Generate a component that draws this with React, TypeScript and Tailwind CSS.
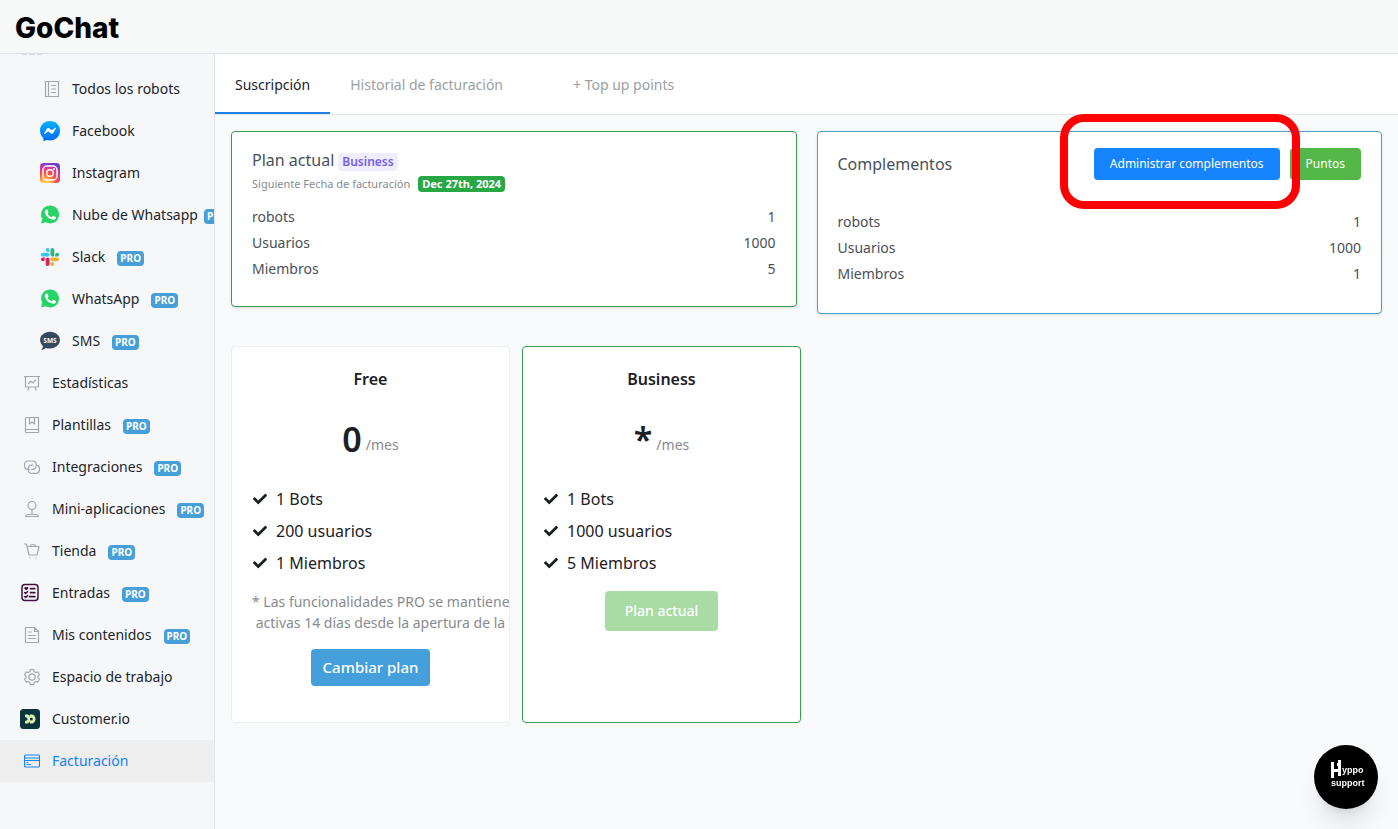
import type { ReactNode } from 'react';
import { FaCheck } from 'react-icons/fa';

interface MenuItem {
  label: string;
  icon: ReactNode;
  nested?: boolean;
  pro?: boolean;
  active?: boolean;
  tight?: boolean;
}

function LineIcon({ children }: { children: ReactNode }) {
  return (
    <svg
      className="w-4 h-4 shrink-0"
      viewBox="0 0 16 16"
      fill="none"
      stroke="currentColor"
      strokeWidth="1.200"
      strokeLinecap="round"
      strokeLinejoin="round"
    >
      {children}
    </svg>
  );
}

function MessengerIcon() {
  return (
    <svg className="w-5 h-5" viewBox="0 0 20 20">
      <defs>
        <linearGradient id="messenger" x1="0" y1="0" x2="0" y2="1">
          <stop offset="0" stopColor="#00b2ff" />
          <stop offset="1" stopColor="#006aff" />
        </linearGradient>
      </defs>
      <path
        fill="url(#messenger)"
        d="M10 0C4.400 0 0 4.100 0 9.600c0 2.900 1.200 5.400 3.100 7.100.2.200.3.400.3.700v1.800c0 .6.600 1 1.100.7l2-.9c.2-.1.400-.1.500 0 1 .3 2 .4 3 .4 5.600 0 10-4.100 10-9.700S15.600 0 10 0z"
      />
      <path
        fill="#fff"
        d="m4 12.400 2.900-4.700c.5-.7 1.500-.9 2.200-.4l2.300 1.800c.2.200.5.200.7 0l3.200-2.400c.4-.3 1 .2.700.6l-2.900 4.700c-.5.700-1.500.9-2.200.4L8.600 10.600c-.2-.2-.5-.2-.7 0L4.700 13c-.4.300-1-.2-.7-.6z"
      />
    </svg>
  );
}

function InstagramIcon() {
  return (
    <svg className="w-5 h-5" viewBox="0 0 20 20">
      <defs>
        <radialGradient id="insta" cx="0.27" cy="1.05" r="1.05">
          <stop offset="0" stopColor="#ffdd55" />
          <stop offset="0.2" stopColor="#ffc050" />
          <stop offset="0.5" stopColor="#ff543e" />
          <stop offset="0.85" stopColor="#c837ab" />
          <stop offset="1" stopColor="#6a3fd0" />
        </radialGradient>
      </defs>
      <rect width="20" height="20" rx="3.500" fill="url(#insta)" />
      <rect x="3" y="3" width="14" height="14" rx="4" fill="none" stroke="#fff" strokeWidth="1.400" />
      <circle cx="10" cy="10" r="3.300" fill="none" stroke="#fff" strokeWidth="1.400" />
      <circle cx="14" cy="6" r="0.900" fill="#fff" />
    </svg>
  );
}

function WhatsappIcon() {
  return (
    <svg className="w-5 h-5" viewBox="0 0 20 20">
      <path
        fill="#25d366"
        d="M10.100 .5C5.100 .5 1.100 4.500 1.100 9.400c0 1.600.4 3.100 1.200 4.500L1 18.500l4.800-1.200c1.300.7 2.800 1.100 4.300 1.100 5 0 8.900-4 8.900-9S15 .5 10.100 .5z"
      />
      <path
        fill="#fff"
        d="M7.600 5c-.2-.4-.4-.4-.6-.4h-.5c-.2 0-.5.100-.7.300-.3.300-1 .9-1 2.200s1 2.600 1.100 2.800c.1.200 1.900 3 4.700 4.100 2.300.9 2.800.7 3.300.7.500-.1 1.600-.7 1.900-1.300.2-.6.200-1.200.1-1.300 0-.1-.2-.2-.5-.3l-1.900-.9c-.3-.1-.5-.1-.7.100l-.8 1.100c-.2.200-.3.200-.6.100-.3-.2-1.200-.5-2.200-1.400-.8-.7-1.400-1.600-1.500-1.900-.2-.3 0-.4.100-.6l.7-.9c.1-.2 0-.4 0-.5z"
      />
    </svg>
  );
}

function SlackIcon() {
  return (
    <svg className="w-[18px] h-[18px] mx-auto" viewBox="0 0 122 122">
      <path fill="#e01e5a" d="M26 77a13 13 0 1 1-13-13h13zm6 0a13 13 0 1 1 26 0v32a13 13 0 1 1-26 0z" />
      <path fill="#36c5f0" d="M45 26a13 13 0 1 1 13-13v13zm0 6a13 13 0 1 1 0 26H13a13 13 0 1 1 0-26z" />
      <path fill="#2eb67d" d="M96 45a13 13 0 1 1 13 13H96zm-6 0a13 13 0 1 1-26 0V13a13 13 0 1 1 26 0z" />
      <path fill="#ecb22e" d="M77 96a13 13 0 1 1-13 13V96zm0-6a13 13 0 1 1 0-26h32a13 13 0 1 1 0 26z" />
    </svg>
  );
}

function SmsIcon() {
  return (
    <svg className="w-5 h-5" viewBox="0 0 20 20">
      <path
        fill="#34495e"
        d="M10 .8C4.500 .8 .1 4.400.1 9.100c0 2.500 1.200 4.600 2.900 6.100-.1 1.300-.6 2.400-1.900 3.600 2 0 3.600-.6 4.900-1.800 1.300.4 2.600.6 4 .6 5.500 0 9.900-3.800 9.900-8.500S15.500 .8 10 .8z"
      />
      <text x="10" y="11.600" textAnchor="middle" fontSize="6.500" fontWeight="700" fill="#fff" fontFamily="Noto Sans, sans-serif">
        SMS
      </text>
    </svg>
  );
}

function TicketIcon() {
  return (
    <svg className="w-5 h-5" viewBox="0 0 20 20" fill="none" stroke="#43113f" strokeWidth="1.700" strokeLinecap="round">
      <rect x="2" y="1.500" width="16" height="16" rx="3" strokeWidth="1.500" />
      <path d="M10.500 5.700h4.300M10.500 9.700h4.300M9.500 13.700h5.300" />
      <path d="m4.600 9.500 1.100 1 2-2M4.600 13.500l1.100 1 2-2" strokeWidth="1.400" />
      <path d="M6.300 7.500 4.400 5.600c-.6-1.100 1-2.100 1.900-1 .9-1.100 2.500-.1 1.900 1z" fill="#43113f" stroke="none" />
    </svg>
  );
}

function CustomerIcon() {
  return (
    <svg className="w-5 h-5" viewBox="0 0 20 20">
      <rect width="20" height="20" rx="3.500" fill="#0b353b" />
      <path
        fill="#d9f5b5"
        d="M5 5.500h2.200c1.300 0 2.300.9 2.700 2.200V5.500h1.600c2.300 0 4 2 4 4.500s-1.700 4.500-4 4.500H9.900v-2.200c-.4 1.300-1.400 2.200-2.700 2.200H5v-2.800h1.100c.8 0 1.300-.7 1.300-1.700S6.900 8.300 6.100 8.300H5z"
      />
      <circle cx="11.300" cy="10" r="1.500" fill="#0b353b" />
    </svg>
  );
}

const menuItems: MenuItem[] = [
  {
    label: 'Todos los robots',
    nested: true,
    icon: (
      <LineIcon>
        <path d="M1.500 .5h13v15h-13zM4.500 .5v15M7.500 4.500h4M7.500 8h4M7.500 11.500h4" />
      </LineIcon>
    )
  },
  { label: 'Facebook', nested: true, icon: <MessengerIcon /> },
  { label: 'Instagram', nested: true, icon: <InstagramIcon /> },
  { label: 'Nube de Whatsapp', nested: true, pro: true, tight: true, icon: <WhatsappIcon /> },
  { label: 'Slack', nested: true, pro: true, icon: <SlackIcon /> },
  { label: 'WhatsApp', nested: true, pro: true, icon: <WhatsappIcon /> },
  { label: 'SMS', nested: true, pro: true, icon: <SmsIcon /> },
  {
    label: 'Estadísticas',
    icon: (
      <LineIcon>
        <path d="M.5 1.500h15M1.500 1.500v10.500h13V1.500M5 12.500l-1.200 2.500M11 12.500l1.200 2.500M4.500 8.500l2.300-2.300 2 1.600L11.500 5" />
      </LineIcon>
    )
  },
  {
    label: 'Plantillas',
    pro: true,
    icon: (
      <LineIcon>
        <path d="M2.500 .5h12v15h-12a1 1 0 0 1-1-1v-13a1 1 0 0 1 1-1zM1.500 13.500a1 1 0 0 1 1-1h12M5.500 .5v6.500L8 5l2.500 2V.5" />
      </LineIcon>
    )
  },
  {
    label: 'Integraciones',
    pro: true,
    icon: (
      <LineIcon>
        <path d="M5 10.300H4a3.500 3.500 0 0 1-3.500-3.500V5.500A3.500 3.500 0 0 1 4 2h4.700a3.500 3.500 0 0 1 3.500 3.500v1.300a3.500 3.500 0 0 1-3.500 3.500H7.500" />
        <path d="M13 6.300a3.500 3.500 0 0 1 2.500 3.300v1.200a3.500 3.500 0 0 1-3.500 3.500H7.800a3.500 3.500 0 0 1-3.500-3.500V9.600a3.500 3.500 0 0 1 3.500-3.500h1" />
      </LineIcon>
    )
  },
  {
    label: 'Mini-aplicaciones',
    pro: true,
    icon: (
      <LineIcon>
        <circle cx="8" cy="4.500" r="4" />
        <path d="M8 8.500v5M3 13.500h10l1.500 2h-13z" />
      </LineIcon>
    )
  },
  {
    label: 'Tienda',
    pro: true,
    icon: (
      <LineIcon>
        <path d="M.5 1h2l2.500 11h8l2-8.500H3.500M6 3.500c1-2.700 5-2.700 6 0M6 14.800v.2M12 14.800v.2" />
      </LineIcon>
    )
  },
  { label: 'Entradas', pro: true, icon: <TicketIcon /> },
  {
    label: 'Mis contenidos',
    pro: true,
    icon: (
      <LineIcon>
        <path d="M1.500 .5h9l4 4v11h-13zM10.500 .5v4h4M4.500 5h3M4.500 8.500h7M4.500 11.500h7" />
      </LineIcon>
    )
  },
  {
    label: 'Espacio de trabajo',
    icon: (
      <LineIcon>
        <circle cx="8" cy="8" r="3.200" />
        <path d="M6.300 .6h3.400l.6 2.100 1.300.8 2.100-.6 1.700 2.900L13.900 7.300v1.400l1.500 1.500-1.700 2.900-2.100-.6-1.300.8-.6 2.100H6.300l-.6-2.100-1.300-.8-2.100.6L.6 10.200 2.100 8.700V7.300L.6 5.800l1.700-2.900 2.100.6 1.300-.8z" />
      </LineIcon>
    )
  },
  { label: 'Customer.io', icon: <CustomerIcon /> },
  {
    label: 'Facturación',
    active: true,
    icon: (
      <LineIcon>
        <rect x="0.500" y="2" width="15" height="12" rx="1.500" />
        <path d="M.5 5h15M.5 7.500h15M2.800 11.500h3.500M2.800 9.500h1" />
      </LineIcon>
    )
  }
];

function Sidebar() {
  return (
    <nav className="w-[215px] shrink-0 overflow-hidden border-r border-[#dfe2e6] bg-[#f5f7f9]">
      {/* bottom edge of the section scrolled under the header */}
      <div className="h-3.5 pl-[22px]">
        <svg className="w-5 h-px" viewBox="0 0 20 1">
          <path d="M0 .5h5M7.500 .5h5M15 .5h5" stroke="#d5d8db" />
        </svg>
      </div>
      <ul>
        {menuItems.map((item) => (
          <li key={item.label}>
            <a
              href="#"
              className={`flex h-[42px] items-center whitespace-nowrap text-sm ${item.nested ? 'pl-10' : 'pl-5'} ${
                item.active ? 'bg-[#eeeeef] text-[#1482f8]' : 'text-[#212529]'
              }`}
            >
              <span className={`flex w-5 shrink-0 justify-end ${item.active ? '' : 'text-[#a3a8ae]'}`}>{item.icon}</span>
              <span className="ml-3">{item.label}</span>
              {item.pro && (
                <span
                  className={`mt-0.5 rounded bg-[#469fd8] px-[3px] text-[10px] leading-[15px] font-bold text-white ${
                    item.tight ? 'ml-1.5' : 'ml-3'
                  }`}
                >
                  PRO
                </span>
              )}
            </a>
          </li>
        ))}
      </ul>
    </nav>
  );
}

function UsageTable({ rows }: { rows: [string, number][] }) {
  return (
    <table className="w-full text-sm leading-[26px]">
      <tbody>
        {rows.map(([name, value]) => (
          <tr key={name}>
            <th className="p-0 text-left font-normal">{name}</th>
            <td className="p-0 text-right">{value}</td>
          </tr>
        ))}
      </tbody>
    </table>
  );
}

interface PlanCardProps {
  name: string;
  price: string;
  features: string[];
  current?: boolean;
  children: ReactNode;
}

function PlanCard({ name, price, features, current, children }: PlanCardProps) {
  return (
    <section
      className={`w-[279px] overflow-hidden rounded border bg-white px-5 pt-5 pb-9 text-[#1c2025] ${
        current ? 'border-[#37a04f]' : 'border-[#eceef0]'
      }`}
    >
      <h2 className="text-center text-base font-semibold">{name}</h2>
      <p className="mt-6 flex items-end justify-center gap-1 text-[34px] leading-[48px] font-semibold">
        {price}
        <span className="pb-1 text-sm leading-7 font-normal text-[#868b90]">/mes</span>
      </p>
      <ul className="mt-5">
        {features.map((feature) => (
          <li key={feature} className="flex h-8 items-center gap-2">
            <span className="flex w-4 justify-center">
              <FaCheck className="h-3.5 w-3.5" />
            </span>
            {feature}
          </li>
        ))}
      </ul>
      {children}
    </section>
  );
}

export default function App() {
  return (
    <div className="flex min-h-screen flex-col bg-[#f9fafc] font-['Noto_Sans',sans-serif] text-[#212529]">
      <header className="flex h-[54px] items-center border-b border-[#dfe2e6] bg-[#f7f8f8] px-[15px] pt-0.5">
        <a href="#" className="font-['Inter',sans-serif] text-[28px] font-extrabold text-black">
          GoChat
        </a>
      </header>

      <div className="flex flex-1">
        <Sidebar />

        <main className="min-w-0 flex-1">
          {/* Tabs */}
          <div className="flex h-[61px] border-b border-[#e3e5e9] bg-white text-sm text-[#9a9fa5]">
            <button className="border-b-2 border-[#1e80e8] px-5 pt-1 text-[#212529]">Suscripción</button>
            <button className="px-5 pt-0.5">Historial de facturación</button>
            <button className="pr-5 pl-[50px] pt-0.5">+ Top up points</button>
          </div>

          <div className="p-4">
            <div className="grid grid-cols-2 items-start gap-5 text-[#495057]">
              {/* Current plan */}
              <section className="rounded border border-[#37a04f] bg-white px-5 pt-4 pb-6 shadow-sm">
                <h2 className="flex items-center gap-1 text-base">
                  Plan actual
                  <span className="mt-1 rounded bg-[#f0edff] px-1 text-xs leading-[18px] font-semibold text-[#7460ee]">
                    Business
                  </span>
                </h2>
                <p className="flex items-center gap-2 text-[11px] leading-6 text-[#868b90]">
                  Siguiente Fecha de facturación
                  <span className="rounded bg-[#28a745] px-1 leading-4 font-bold text-white">Dec 27th, 2024</span>
                </p>
                <div className="mt-2">
                  <UsageTable rows={[['robots', 1], ['Usuarios', 1000], ['Miembros', 5]]} />
                </div>
              </section>

              {/* Add-ons */}
              <section className="rounded border border-[#4aa0c4] bg-white px-5 pt-4 pb-[26px] shadow-sm">
                <div className="flex items-center justify-between">
                  <h2 className="text-base">Complementos</h2>
                  <div className="flex gap-2.5 text-xs text-white">
                    <div className="relative z-10">
                      <button className="h-8 rounded-sm bg-[#1684fc] px-4">Administrar complementos</button>
                      <span className="pointer-events-none absolute -top-[34px] -right-5 -bottom-[29px] -left-[34px] rounded-3xl border-8 border-[#fe0000]" />
                    </div>
                    <button className="h-8 rounded-sm bg-[#54b848] px-4">Puntos</button>
                  </div>
                </div>
                <div className="mt-[29px]">
                  <UsageTable rows={[['robots', 1], ['Usuarios', 1000], ['Miembros', 1]]} />
                </div>
              </section>
            </div>

            {/* Plans */}
            <div className="mt-8 flex gap-3">
              <PlanCard name="Free" price="0" features={['1 Bots', '200 usuarios', '1 Miembros']}>
                <p className="mt-3 text-sm leading-[21px] whitespace-pre text-[#868b90]">
                  {'* Las funcionalidades PRO se mantienen\n activas 14 días desde la apertura de la'}
                </p>
                <div className="mt-4 text-center">
                  <button className="rounded-sm bg-[#449fdb] px-3 py-2 text-[15px] leading-[21px] font-medium text-white">
                    Cambiar plan
                  </button>
                </div>
              </PlanCard>
              <PlanCard name="Business" price="*" current features={['1 Bots', '1000 usuarios', '5 Miembros']}>
                <div className="mt-3 text-center">
                  <button disabled className="h-10 rounded-sm bg-[#a9dca4] px-5 text-sm font-medium text-white">
                    Plan actual
                  </button>
                </div>
              </PlanCard>
            </div>
          </div>
        </main>
      </div>

      <button className="fixed right-5 bottom-5 flex h-16 w-16 items-center justify-center rounded-full bg-black shadow-xl">
        <svg
          className="h-16 w-16"
          viewBox="0 0 64 64"
          fill="#fff"
          fontFamily="Liberation Sans Narrow, Liberation Sans, sans-serif"
          fontWeight="700"
        >
          <path d="M17 17h3v7h4v-3h-1v-3h1v-3h3v16h-3v-4h-4v6h-3z" />
          <text x="28" y="28" fontSize="9">yppo</text>
          <text x="17" y="41" fontSize="9">support</text>
        </svg>
      </button>
    </div>
  );
}
